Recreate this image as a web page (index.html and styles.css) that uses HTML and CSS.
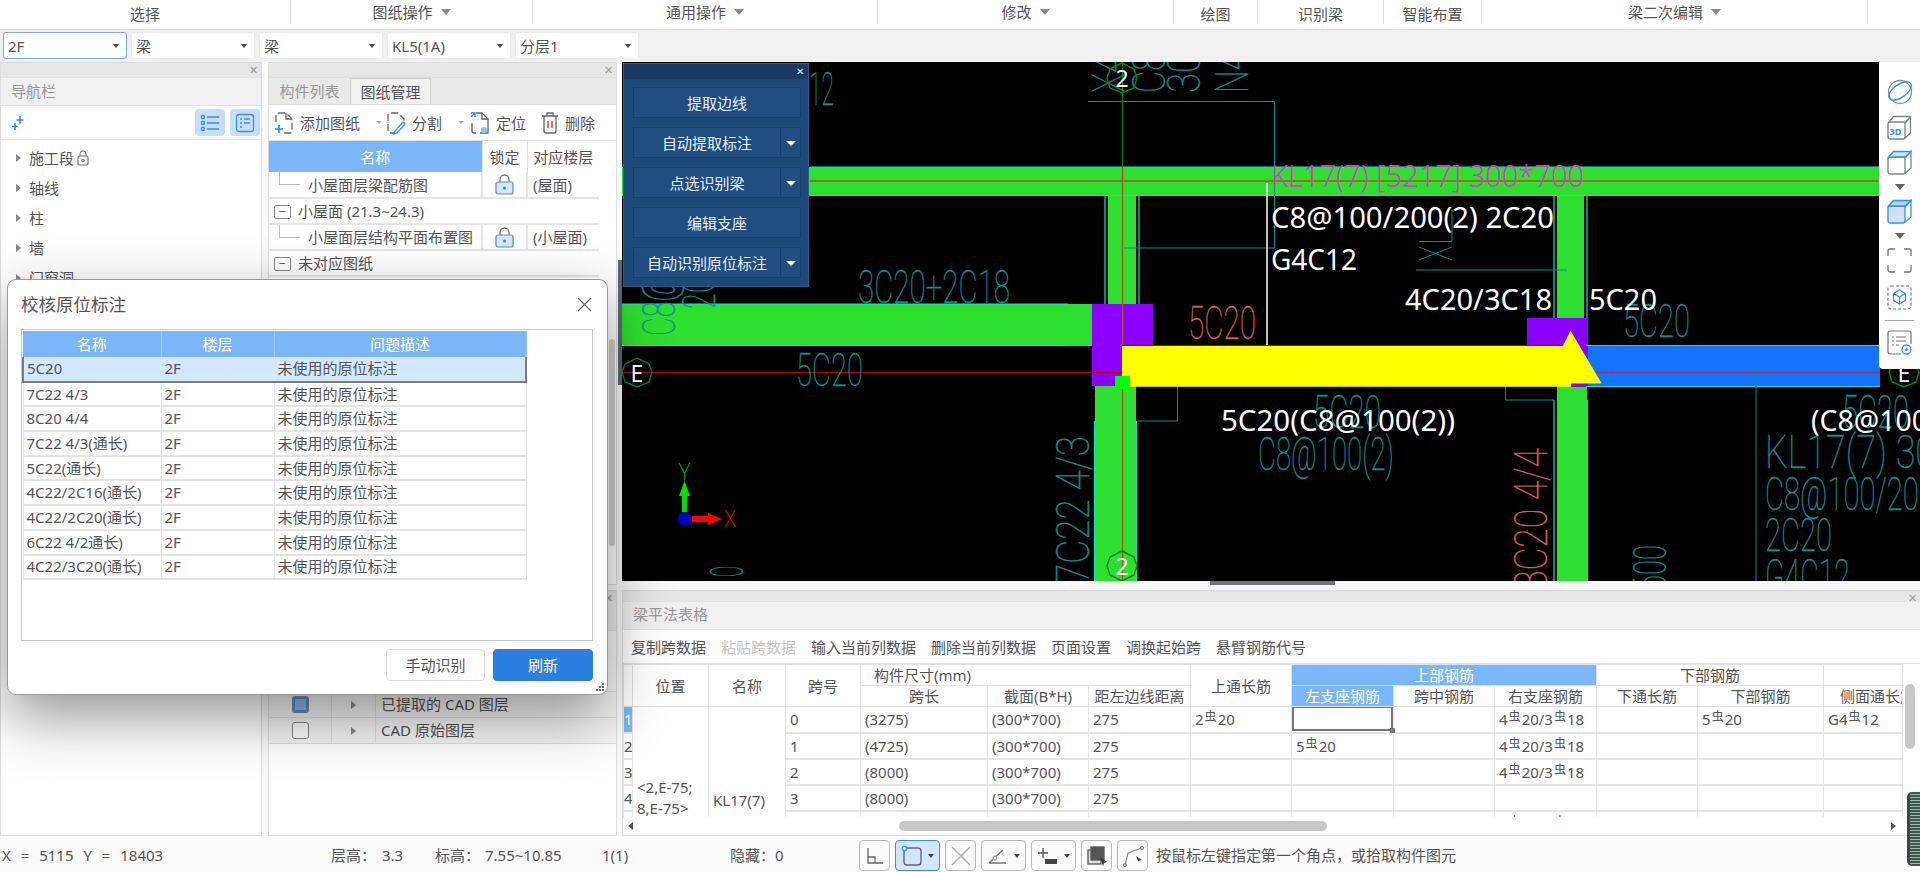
FILE: index.html
```html
<!DOCTYPE html>
<html lang="zh-CN">
<head>
<meta charset="utf-8">
<title>梁平法</title>
<link rel="stylesheet" href="styles.css">
</head>
<body>
<div class="app">
  <nav class="menu">
    <div class="mi low">选择</div>
    <div class="mi">图纸操作<i class="tri"></i></div>
    <div class="mi">通用操作<i class="tri"></i></div>
    <div class="mi">修改<i class="tri"></i></div>
    <div class="mi low">绘图</div>
    <div class="mi low">识别梁</div>
    <div class="mi low">智能布置</div>
    <div class="mi">梁二次编辑<i class="tri"></i></div>
    <div class="mi last"></div>
  </nav>
  <div class="selects">
    <div class="sel active">2F<i class="tri-sm"></i></div>
    <div class="sel">梁<i class="tri-sm"></i></div>
    <div class="sel">梁<i class="tri-sm"></i></div>
    <div class="sel">KL5(1A)<i class="tri-sm"></i></div>
    <div class="sel">分层1<i class="tri-sm"></i></div>
  </div>

  <main class="main">
    <section class="col-left panel">
      <div class="phead"><span class="px">✕</span></div>
      <div class="ptitle">导航栏</div>
      <div class="nav-tools">
        <svg class="sparkle" width="14" height="16" viewBox="0 0 14 16"><path d="M9 1v8M5.500 5h7M4 8v7M1 11.500h6" fill="none" stroke="#2b86ea" stroke-width="1.500"/></svg>
        <span class="tog"><svg width="20" height="20" viewBox="0 0 20 20" fill="none" stroke="#3a8fe8" stroke-width="1.300"><rect x="1.500" y="2.500" width="3" height="3" rx="1"/><rect x="1.500" y="8.500" width="3" height="3" rx="1"/><rect x="1.500" y="14.500" width="3" height="3" rx="1"/><path d="M7 4h12M7 10h12M7 16h12"/></svg></span>
        <span class="tog"><svg width="20" height="20" viewBox="0 0 20 20" fill="none" stroke="#3a8fe8" stroke-width="1.300"><rect x="1.500" y="1.500" width="17" height="17" rx="2.500"/><path d="M5 6h2M9 6h6M5 10h2M9 10h6M5 14h2"/></svg></span>
      </div>
      <ul class="tree">
        <li><i class="arr"></i>施工段<svg class="mini-lock" width="12" height="16" viewBox="0 0 12 16" fill="none" stroke="#777" stroke-width="1.200"><path d="M3 6V4a3 3 0 0 1 6 0v2"/><rect x="1" y="6" width="10" height="9" rx="1.500"/><circle cx="6" cy="10.500" r="1.200"/></svg></li>
        <li><i class="arr"></i>轴线</li>
        <li><i class="arr"></i>柱</li>
        <li><i class="arr"></i>墙</li>
        <li><i class="arr"></i>门窗洞</li>
      </ul>
    </section>

    <div class="col-mid">
      <section class="panel mid-top">
        <div class="phead"><span class="px">✕</span></div>
        <div class="tabs"><span class="tab">构件列表</span><span class="tab on">图纸管理</span></div>
        <div class="mid-tools">
          <span class="ti ti-add"><svg width="20" height="24" viewBox="0 0 20 24" fill="none" stroke="#666" stroke-width="1.300"><path d="M2 11V4a2 2 0 0 1 2-2h8l6 6v12a2 2 0 0 1-2 2h-6" stroke-dasharray="7 3"/><path d="M12 2v6h6"/><path d="M5 14v8M1 18h8" stroke="#2b86ea" stroke-width="1.600"/></svg>添加图纸<i class="tri-xs"></i></span>
          <span class="ti ti-split"><svg width="20" height="24" viewBox="0 0 20 24" fill="none" stroke="#666" stroke-width="1.300"><path d="M2 20V4a2 2 0 0 1 2-2h8l6 6v4M4 22h4" stroke-dasharray="7 3"/><path d="M17 11l2 2-8 9-3 1 1-3z" stroke="#3a8fe8"/></svg>分割<i class="tri-xs"></i></span>
          <span class="ti ti-loc"><svg width="20" height="24" viewBox="0 0 20 24" fill="none" stroke="#666" stroke-width="1.300"><path d="M6 2h6l6 6v14H10M2 12v8a2 2 0 0 0 2 2h2"/><path d="M12 2v6h6"/><path d="M1 6l4-4M1 2h4v4" stroke="#2b86ea"/><circle cx="14" cy="19" r="3" fill="#8fc1f5" stroke="none"/></svg>定位</span>
          <span class="ti ti-del"><svg width="18" height="24" viewBox="0 0 18 24" fill="none" stroke="#666" stroke-width="1.300"><path d="M1 5h16M6 5V2h6v3"/><path d="M3 5v15a2 2 0 0 0 2 2h8a2 2 0 0 0 2-2V5"/><path d="M7 10v7M11 10v7" stroke="#e04a3a" stroke-width="1.600"/></svg>删除</span>
        </div>
        <table class="dwg">
          <colgroup><col class="d1"><col class="d2"><col class="d3"></colgroup>
          <tr><th class="blue">名称</th><th>锁定</th><th>对应楼层</th></tr>
          <tr><td class="leaf"><i class="branch"></i>小屋面层梁配筋图</td><td class="ctr"><svg width="19" height="21" viewBox="0 0 19 21" fill="none"><path d="M5 9V5.500a4.500 4.500 0 0 1 9 0V9" stroke="#777" stroke-width="1.300"/><rect x="1" y="8" width="17" height="12" rx="2" fill="#d5e6f9" stroke="#6a86a8" stroke-width="1.200"/><circle cx="9.500" cy="14" r="1.500" fill="#2b86ea"/></svg></td><td>(屋面)</td></tr>
          <tr><td colspan="3" class="grp"><i class="exp">−</i>小屋面 (21.3~24.3)</td></tr>
          <tr><td class="leaf"><i class="branch"></i>小屋面层结构平面布置图</td><td class="ctr"><svg width="19" height="21" viewBox="0 0 19 21" fill="none"><path d="M5 9V5.500a4.500 4.500 0 0 1 9 0V9" stroke="#777" stroke-width="1.300"/><rect x="1" y="8" width="17" height="12" rx="2" fill="#d5e6f9" stroke="#6a86a8" stroke-width="1.200"/><circle cx="9.500" cy="14" r="1.500" fill="#2b86ea"/></svg></td><td>(小屋面)</td></tr>
          <tr><td colspan="3" class="grp"><i class="exp">−</i>未对应图纸</td></tr>
        </table>
        <div class="mid-scroll"></div>
      </section>
      <section class="panel mid-bot">
        <div class="phead small"><span class="px">✕</span></div>
        <div class="pband"></div>
        <div class="layers">
          <div class="lrow blank"></div>
          <div class="lrow"><span class="lc"><i class="chk on"></i></span><span class="la"><i class="arr"></i></span><span class="ln">已提取的 CAD 图层</span></div>
          <div class="lrow"><span class="lc"><i class="chk"></i></span><span class="la"><i class="arr"></i></span><span class="ln">CAD 原始图层</span></div>
        </div>
      </section>
    </div>

    <div class="col-right">
      <div class="canvas">
        <svg class="cad" width="1298" height="519" viewBox="622 62 1298 519">
          <!-- beams -->
          <rect class="gr" x="622" y="167" width="1260" height="29"/>
          <rect class="gr" x="1108" y="196" width="28" height="110"/>
          <rect class="gr" x="1557" y="196" width="27" height="124"/>
          <rect class="gr" x="622" y="304" width="472" height="42"/>
          <rect class="gr" x="1095" y="386" width="41" height="195"/>
          <rect class="gr" x="1557" y="386" width="30" height="195"/>
          <rect class="bl" x="1586" y="345" width="294" height="42"/>
          <!-- column blocks -->
          <path class="pu" d="M1092 304h61v41h-31v41h-30z"/>
          <path class="pu" d="M1527 318h61v69h-17v-42h-44z"/>
          <!-- cyan beam edges -->
          <g class="edge">
            <path d="M810 167H1880M810 195.500H1880"/>
            <path d="M1105 196V304M1139 196V304M1554 196V318M1587 196V318"/>
            <path d="M622 304H1068M622 345.500H1068"/>
            <path d="M1586 345.500H1880M1586 386.500H1880"/>
            <path d="M1094.500 421V581M1136.500 421V581M1554 400V581M1587.500 400V581"/>
          </g>
          <!-- teal helper lines -->
          <g class="tl">
            <path d="M1088 101.500H1274.500V248H1124"/>
            <path d="M1419 241.500H1452V210M1416 270H1567M1419 247L1452 260M1419 260L1452 247"/>
            <path d="M1177.500 387V421H1137M1505.500 387V400H1554M1756 367V581"/>
          </g>
          <!-- axis lines -->
          <path class="ax-g" d="M1122.500 62V167"/>
          <path class="ax-b" d="M1122.500 167V345M1122.500 386V581M810 181H1880"/>
          <path class="ax-r" d="M622 372.500H1122"/>
          <path class="ax-m" d="M1586 372.500H1880"/>
          <path class="wh" d="M1267 183V345"/>
          <!-- active beam -->
          <polygon class="ye" points="1122,345.700 1563,345.700 1570.600,330.700 1601.700,383.500 1571,383.500 1571,386.700 1122,386.700"/>
          <rect class="sq" x="1115" y="376" width="15" height="13"/>
          <!-- teal CAD text -->
          <g class="t">
            <text x="809" y="105" textLength="25" lengthAdjust="spacingAndGlyphs">12</text>
            <text x="858" y="303" textLength="152" lengthAdjust="spacingAndGlyphs">3C20+2C18</text>
            <text x="796" y="386" textLength="67" lengthAdjust="spacingAndGlyphs">5C20</text>
            <text x="1313" y="428" textLength="68" lengthAdjust="spacingAndGlyphs">5C20</text>
            <text x="1258" y="470" textLength="136" lengthAdjust="spacingAndGlyphs">C8@100(2)</text>
            <text x="1623" y="337" textLength="67" lengthAdjust="spacingAndGlyphs">5C20</text>
            <text x="1842" y="428" textLength="67" lengthAdjust="spacingAndGlyphs">5C20</text>
            <text x="1765" y="468" textLength="170" lengthAdjust="spacingAndGlyphs">KL17(7) 30</text>
            <text x="1765" y="510" textLength="170" lengthAdjust="spacingAndGlyphs">C8@100/200</text>
            <text x="1765" y="551" textLength="67" lengthAdjust="spacingAndGlyphs">2C20</text>
            <text x="1765" y="592" textLength="85" lengthAdjust="spacingAndGlyphs">G4C12</text>
            <text transform="translate(1089,584) rotate(-90)" textLength="148" lengthAdjust="spacingAndGlyphs">7C22 4/3</text>
            <text transform="translate(675,336) rotate(-90)" textLength="200" lengthAdjust="spacingAndGlyphs">C8@100/200(2)</text>
            <text transform="translate(715,309) rotate(-90)" textLength="66" lengthAdjust="spacingAndGlyphs">2C20</text>
            <text transform="translate(743,577) rotate(-90)" textLength="11" lengthAdjust="spacingAndGlyphs">0</text>
            <text transform="translate(1666,590) rotate(-90)" textLength="45" lengthAdjust="spacingAndGlyphs">600</text>
            <text transform="translate(1125,93) rotate(-90)" textLength="60" lengthAdjust="spacingAndGlyphs">X4C</text>
            <text transform="translate(1165,93) rotate(-90)" textLength="60" lengthAdjust="spacingAndGlyphs">C88</text>
            <text transform="translate(1200,93) rotate(-90)" textLength="60" lengthAdjust="spacingAndGlyphs">300</text>
            <text transform="translate(1248,93) rotate(-90)" textLength="40" lengthAdjust="spacingAndGlyphs">N4</text>
          </g>
          <g class="t rd">
            <text x="1188" y="339" textLength="68" lengthAdjust="spacingAndGlyphs">5C20</text>
            <text transform="translate(1546.500,590) rotate(-90)" textLength="142" lengthAdjust="spacingAndGlyphs">8C20 4/4</text>
          </g>
          <!-- annotations -->
          <text class="mg" x="1271" y="187" textLength="313" lengthAdjust="spacingAndGlyphs">KL17(7) [5217] 300*700</text>
          <g class="wt">
            <text x="1271" y="228" textLength="283" lengthAdjust="spacingAndGlyphs">C8@100/200(2) 2C20</text>
            <text x="1271" y="270" textLength="86" lengthAdjust="spacingAndGlyphs">G4C12</text>
            <text x="1405" y="310" textLength="147" lengthAdjust="spacingAndGlyphs">4C20/3C18</text>
            <text x="1589" y="310" textLength="68" lengthAdjust="spacingAndGlyphs">5C20</text>
            <text x="1221" y="431" textLength="234" lengthAdjust="spacingAndGlyphs">5C20(C8@100(2))</text>
            <text x="1811" y="431" textLength="117" lengthAdjust="spacingAndGlyphs">(C8@100</text>
          </g>
          <!-- axis bubbles -->
          <g class="bub">
            <polygon points="1122,63 1134,69 1137,78 1134,88 1122,93 1110,88 1107,78 1110,69"/>
            <polygon points="1122,551 1134,557 1137,566 1134,575 1122,581 1110,575 1107,566 1110,557"/>
            <polygon points="637,358 649,364 652,372 649,382 637,387 625,382 622,372 625,364"/>
            <polygon points="1904,358 1916,364 1919,372 1916,382 1904,387 1892,382 1889,372 1892,364"/>
          </g>
          <g class="bt">
            <text x="1122" y="87">2</text>
            <text x="1122" y="575">2</text>
            <text x="637" y="382">E</text>
            <text x="1904" y="382">E</text>
          </g>
          <!-- UCS -->
          <path class="ucs-y" d="M684.500 512V491"/>
          <polygon class="ucs-yh" points="684.500,481 679,496 690,496"/>
          <text class="ucs-yt" x="684.500" y="480" textLength="12" lengthAdjust="spacingAndGlyphs">Y</text>
          <path class="ucs-x" d="M692 519H710"/>
          <polygon class="ucs-xh" points="722,519 708,513 708,525"/>
          <text class="ucs-xt" x="724" y="527" textLength="12" lengthAdjust="spacingAndGlyphs">X</text>
          <circle class="ucs-o" cx="685" cy="519" r="7"/>
        </svg>

        <div class="float">
          <div class="float-head"><span>✕</span></div>
          <div class="fbtn"><span>提取边线</span></div>
          <div class="fbtn split"><span>自动提取标注</span><b></b></div>
          <div class="fbtn split"><span>点选识别梁</span><b></b></div>
          <div class="fbtn"><span>编辑支座</span></div>
          <div class="fbtn split"><span>自动识别原位标注</span><b></b></div>
        </div>

        <aside class="rtools">
          <svg width="26" height="26" viewBox="0 0 26 26" fill="none"><circle cx="13" cy="13" r="11.500" stroke="#8a8f96" stroke-width="1.300"/><ellipse cx="13" cy="12" rx="13" ry="6.500" transform="rotate(-35 13 12)" stroke="#3a8fe8" stroke-width="1.400"/></svg>
          <svg width="25" height="25" viewBox="0 0 25 25" fill="none" stroke="#7c838c" stroke-width="1.300"><rect x="1" y="7" width="17" height="17" rx="2"/><path d="M1.500 8l5-6.500h16a1 1 0 0 1 1 1V18l-6 5.500M18 8l6-6.500"/><text class="t3d" x="2.500" y="20">3D</text></svg>
          <svg width="25" height="25" viewBox="0 0 25 25" fill="none" stroke="#7c838c" stroke-width="1.300"><rect x="1" y="7" width="17" height="17" rx="2"/><path d="M18 8l6-6.500V18l-6 5.500"/><path d="M1.500 7l5-5.500h17.500L18 7z" fill="#cfe2f9" stroke="#3a8fe8"/></svg>
          <i class="tri-r"></i>
          <svg width="25" height="25" viewBox="0 0 25 25" fill="none" stroke="#3a8fe8" stroke-width="1.300"><rect x="1" y="7" width="17" height="17" rx="2" fill="#cfe2f9"/><path d="M18 8l6-6.500V18l-6 5.500"/><path d="M1.500 7l5-5.500h17.500L18 7z" fill="#b3d2f6"/></svg>
          <i class="tri-r"></i>
          <svg class="corners" width="25" height="25" viewBox="0 0 25 25" fill="none" stroke="#6f767e" stroke-width="1.300"><path d="M1 8V3a2 2 0 0 1 2-2h5M17 1h5a2 2 0 0 1 2 2v5M24 17v5a2 2 0 0 1-2 2h-5M8 24H3a2 2 0 0 1-2-2v-5"/></svg>
          <svg width="25" height="25" viewBox="0 0 25 25" fill="none" stroke="#6f767e" stroke-width="1.200"><rect x="1" y="1" width="23" height="23" rx="3" stroke-dasharray="3 2"/><path d="M12.500 5l6 3.500v7l-6 3.500-6-3.500v-7zM6.500 8.500l6 3.500 6-3.500M12.500 12v7" stroke="#3a8fe8"/></svg>
          <hr>
          <svg width="25" height="25" viewBox="0 0 25 25" fill="none" stroke="#6f767e" stroke-width="1.200"><path d="M14 24H3a2 2 0 0 1-2-2V3a2 2 0 0 1 2-2h19a2 2 0 0 1 2 2v11"/><path d="M5 7h2M9 7h10M5 11h2M9 11h10M5 15h2M9 15h3"/><circle cx="19.500" cy="19.500" r="4.500" stroke="#3a8fe8" stroke-width="1.300"/><circle cx="19.500" cy="19.500" r="1.500" fill="#3a8fe8" stroke="none"/></svg>
        </aside>
      </div>
      <div class="vsplit"></div>

      <section class="panel sheet">
        <div class="phead small"><span class="px">✕</span></div>
        <div class="ptitle sheet-title">梁平法表格</div>
        <div class="sheet-tools">
          <span>复制跨数据</span><span class="off">粘贴跨数据</span><span>输入当前列数据</span><span>删除当前列数据</span><span>页面设置</span><span>调换起始跨</span><span>悬臂钢筋代号</span>
        </div>
        <div class="grid-wrap">
          <table class="grid">
            <colgroup>
              <col class="c0"><col class="c1"><col class="c2"><col class="c3"><col class="c4"><col class="c5"><col class="c6"><col class="c7"><col class="c8"><col class="c9"><col class="c10"><col class="c11"><col class="c12"><col class="c13">
            </colgroup>
            <tr class="h1">
              <th rowspan="2"></th><th rowspan="2">位置</th><th rowspan="2">名称</th><th rowspan="2">跨号</th>
              <th colspan="3" class="left">构件尺寸(mm)</th>
              <th rowspan="2">上通长筋</th>
              <th colspan="3" class="sel-h">上部钢筋</th>
              <th colspan="2">下部钢筋</th>
              <th></th>
            </tr>
            <tr class="h2">
              <th>跨长</th><th>截面(B*H)</th><th>距左边线距离</th>
              <th class="sel-h">左支座钢筋</th><th>跨中钢筋</th><th>右支座钢筋</th><th>下通长筋</th><th>下部钢筋</th><th class="clip">侧面通长筋</th>
            </tr>
            <tr>
              <td class="num active">1</td><td rowspan="5" class="pos">&lt;2,E-75;<br>8,E-75&gt;</td><td rowspan="5" class="nm">KL17(7)</td>
              <td>0</td><td>(3275)</td><td>(300*700)</td><td>275</td><td>2<em>虫</em>20</td><td class="cur"><i></i></td><td></td><td>4<em>虫</em>20/3<em>虫</em>18</td><td></td><td>5<em>虫</em>20</td><td>G4<em>虫</em>12</td>
            </tr>
            <tr>
              <td class="num">2</td><td>1</td><td>(4725)</td><td>(300*700)</td><td>275</td><td></td><td>5<em>虫</em>20</td><td></td><td>4<em>虫</em>20/3<em>虫</em>18</td><td></td><td></td><td></td>
            </tr>
            <tr>
              <td class="num">3</td><td>2</td><td>(8000)</td><td>(300*700)</td><td>275</td><td></td><td></td><td></td><td>4<em>虫</em>20/3<em>虫</em>18</td><td></td><td></td><td></td>
            </tr>
            <tr>
              <td class="num">4</td><td>3</td><td>(8000)</td><td>(300*700)</td><td>275</td><td></td><td></td><td></td><td></td><td></td><td></td><td></td>
            </tr>
            <tr>
              <td class="num">5</td><td>4</td><td>(8000)</td><td>(300*700)</td><td>275</td><td></td><td></td><td></td><td>4<em>虫</em>20/3<em>虫</em>18</td><td></td><td></td><td></td>
            </tr>
          </table>
          <div class="vbar"></div>
        </div>
        <div class="hbar"><i class="larr"></i><div class="hthumb"></div><i class="rarr"></i></div>
      </section>
    </div>
  </main>

  <footer class="status">
    <span class="s-xy">X = 5115 Y = 18403</span>
    <span class="s-a">层高：</span><span class="s-b">3.3</span>
    <span class="s-c">标高：</span><span class="s-d">7.55~10.85</span>
    <span class="s-e">1(1)</span>
    <span class="s-f">隐藏：0</span>
    <div class="sbtns">
      <span class="sb"><svg width="22" height="22" viewBox="0 0 22 22" fill="none" stroke="#666" stroke-width="1.300"><path d="M4 3v15h15M4 12h7v6"/></svg></span>
      <span class="sb wide on"><svg width="22" height="22" viewBox="0 0 22 22" fill="none"><rect x="3" y="3" width="17" height="17" rx="3" stroke="#666" stroke-width="1.400"/><circle cx="3.500" cy="3.500" r="2.300" fill="#d4e6fb" stroke="#3a8fe8" stroke-width="1.200"/></svg><i class="tri-sm"></i></span>
      <span class="sb"><svg width="22" height="22" viewBox="0 0 22 22" fill="none" stroke="#aaa" stroke-width="1.300"><path d="M2 2l18 18M20 2L2 20"/></svg></span>
      <span class="sb wide"><svg width="22" height="22" viewBox="0 0 22 22" fill="none" stroke="#777" stroke-width="1.300"><path d="M2 18h17M2 18L16 5"/><circle cx="8" cy="13" r="1.800" stroke="#999" fill="#fff"/></svg><i class="tri-sm"></i></span>
      <span class="sb wide"><svg width="22" height="22" viewBox="0 0 22 22"><path d="M6 3v10M1 8h10" fill="none" stroke="#555" stroke-width="1.400"/><rect x="8" y="14" width="12" height="5" fill="#444"/></svg><i class="tri-sm"></i></span>
      <span class="sb"><svg width="22" height="22" viewBox="0 0 22 22" fill="none" stroke="#555" stroke-width="1.300"><rect x="2" y="5" width="13" height="14" fill="#ddd"/><rect x="5" y="2" width="13" height="13" fill="#555"/><path d="M14 12l7 5-3 1-1 3z" fill="#333" stroke="none"/></svg></span>
      <span class="sb"><svg width="22" height="22" viewBox="0 0 22 22" fill="none" stroke="#888" stroke-width="1.200"><path d="M3 20l3-12 14-5"/><circle cx="3" cy="20" r="1.500"/><circle cx="20" cy="3" r="1.500"/><path d="M14 11l6 4-4 1z" fill="#444" stroke="none"/></svg></span>
    </div>
    <span class="s-hint">按鼠标左键指定第一个角点，或拾取构件图元</span>
  </footer>
</div>

<div class="sash-v"></div>
<div class="sash-h"></div>
<div class="meter"></div>

<div class="dialog">
  <header class="dlg-head"><h2>校核原位标注</h2><svg class="dlg-x" width="15" height="15" viewBox="0 0 15 15" fill="none" stroke="#666" stroke-width="1.200"><path d="M1 1l13 13M14 1L1 14"/></svg></header>
  <div class="dlg-frame">
    <table class="chk-table">
      <colgroup><col class="k1"><col class="k2"><col class="k3"></colgroup>
      <tr><th>名称</th><th>楼层</th><th>问题描述</th></tr>
      <tr class="picked"><td>5C20</td><td>2F</td><td>未使用的原位标注</td></tr>
      <tr><td>7C22 4/3</td><td>2F</td><td>未使用的原位标注</td></tr>
      <tr><td>8C20 4/4</td><td>2F</td><td>未使用的原位标注</td></tr>
      <tr><td>7C22 4/3(通长)</td><td>2F</td><td>未使用的原位标注</td></tr>
      <tr><td>5C22(通长)</td><td>2F</td><td>未使用的原位标注</td></tr>
      <tr><td>4C22/2C16(通长)</td><td>2F</td><td>未使用的原位标注</td></tr>
      <tr><td>4C22/2C20(通长)</td><td>2F</td><td>未使用的原位标注</td></tr>
      <tr><td>6C22 4/2通长)</td><td>2F</td><td>未使用的原位标注</td></tr>
      <tr><td>4C22/3C20(通长)</td><td>2F</td><td>未使用的原位标注</td></tr>
    </table>
  </div>
  <div class="dlg-actions">
    <button class="btn">手动识别</button>
    <button class="btn primary">刷新</button>
  </div>
  <svg class="grip" width="10" height="10" viewBox="0 0 10 10" fill="#777"><rect x="7" y="1" width="2" height="2"/><rect x="4" y="4" width="2" height="2"/><rect x="7" y="4" width="2" height="2"/><rect x="1" y="7" width="2" height="2"/><rect x="4" y="7" width="2" height="2"/><rect x="7" y="7" width="2" height="2"/></svg>
</div>
</body>
</html>
```

FILE: styles.css
```css
* { box-sizing: border-box; }
html, body { margin: 0; padding: 0; }
body {
  width: 1920px; height: 872px; overflow: hidden; position: relative;
  font: 15px/1.2 "Noto Sans", "Noto Sans CJK SC", sans-serif;
  color: #555; background: #f9f9f9;
}
.app { display: flex; flex-direction: column; height: 872px; }
i, em { font-style: normal; }

/* menu */
.menu {
  display: grid; height: 30px; flex: none; background: #fff; border-bottom: 1px solid #ddd;
  grid-template-columns: 291px 242px 345px 296px 84px 126px 98px 386px 1fr;
}
.mi { height: 24px; border-right: 1px solid #e0e0e0; display: flex; align-items: center; justify-content: center; }
.mi.low { padding-top: 4px; }
.mi.last { border: 0; }
.tri { display: inline-block; margin-left: 8px; border: 5px solid transparent; border-top: 6px solid #888; border-bottom: 0; }
.tri-sm { display: inline-block; border: 3.5px solid transparent; border-top: 4px solid #444; border-bottom: 0; }
.tri-xs { display: inline-block; margin-left: 10px; border: 3px solid transparent; border-top: 3px solid #aaa; border-bottom: 0; }

.selects { height: 32px; flex: none; background: #f0f0f0; padding: 2px 3px; display: flex; gap: 4px; }
.sel {
  width: 124px; height: 27px; background: #fff; border-radius: 3px; border: 1px solid #ececec;
  display: flex; align-items: center; justify-content: space-between; padding: 0 7px 0 4px; color: #555;
}
.sel.active { border-color: #7fa9da; }

/* main layout */
.main { display: grid; grid-template-columns: 262px 349px 1fr; column-gap: 6px; flex: none; height: 774px; background: #fafafa; }
.panel { background: #fff; border: 1px solid #ddd; border-top: 0; }
.col-left { display: flex; flex-direction: column; }
.phead { height: 15px; background: #e6e6e6; position: relative; border-top: 1px solid #d8d8d8; flex: none; }
.phead.small { height: 11px; }
.px { position: absolute; right: 3px; top: 0; font-size: 11px; line-height: 13px; color: #999; }
.ptitle { height: 28px; background: #f0f0f0; color: #999; padding: 4px 0 0 10px; border-top: 1px solid #e2e2e2; flex: none; }
.sheet-title { padding-top: 3px; }
.nav-tools { height: 35px; display: flex; align-items: center; gap: 5px; border-bottom: 1px solid #e2e2e2; padding-right: 1px; border-top: 1px solid #e2e2e2; }
.sparkle { margin: 0 auto 0 10px; }
.tog { width: 30px; height: 27px; background: #c6ddf6; border-radius: 4px; display: flex; align-items: center; justify-content: center; }
.tree { list-style: none; margin: 0; padding: 3px 0 0 0; }
.tree li { height: 30px; padding-left: 15px; display: flex; align-items: center; gap: 8px; position: relative; color: #555; }
.mini-lock { margin-left: -5px; }
.arr { display: inline-block; border: 4px solid transparent; border-left: 5px solid #888; border-right: 0; }

/* middle */
.col-mid { display: flex; flex-direction: column; gap: 5px; }
.mid-top { height: 523px; position: relative; }
.mid-bot { height: 246px; flex: none; }
.tabs { height: 28px; background: #e9e9e9; display: flex; border-bottom: 1px solid #ddd; border-top: 1px solid #dcdcdc; }
.tab { width: 81px; text-align: center; line-height: 27px; color: #999; }
.tab.on { background: #f1f1f1; color: #555; border: 1px solid #cfcfcf; border-bottom: 0; }
.mid-tools { height: 36px; display: flex; align-items: center; border-bottom: 1px solid #e2e2e2; padding-left: 5px; position: relative; }
.ti { display: flex; align-items: center; gap: 6px; }
.ti-add { width: 112px; }
.ti-split { width: 84px; }
.ti-loc { width: 71px; }
.dwg { border-collapse: collapse; table-layout: fixed; width: 330px; margin-left: 0; }
.d1 { width: 213px; } .d2 { width: 45px; } .d3 { width: 72px; }
.dwg th { height: 31px; font-weight: 400; border-right: 1px solid #e2e2e2; }
.dwg th:last-child { border-right: 0; }
.dwg th.blue { background: #7ab6f8; color: #fff; }
.dwg td { height: 26px; border: 2px solid #e6e6e6; border-width: 0 2px 2px 0; padding: 0 0 0 5px; white-space: nowrap; }
.dwg td:last-child { border-right: 0; }
.dwg .ctr { padding: 0; text-align: center; line-height: 0; }
.dwg .leaf { padding-left: 39px; position: relative; }
.branch { position: absolute; left: 10px; top: 0; width: 21px; height: 13px; border-left: 1px solid #bbb; border-bottom: 1px solid #bbb; }
.grp { padding-left: 2px; }
.exp { display: inline-block; width: 17px; height: 14px; line-height: 12px; text-align: center; border: 1px solid #888; border-radius: 2px; margin-right: 7px; font-size: 12px; vertical-align: 1px; }
.mid-scroll { position: absolute; right: 1px; top: 277px; width: 6px; height: 207px; background: #cfcfcf; border-radius: 3px; }
.pband { height: 30px; background: #f0f0f0; border-bottom: 1px solid #e2e2e2; }
.layers { background: #f7f7f7; }
.lrow { height: 26px; display: grid; grid-template-columns: 63px 44px 1fr; border-bottom: 1px solid #dfdfdf; background: #f6f6f6; }
.lrow.blank { height: 61px; background: #fafafa; }
.lc, .la { border-right: 1px solid #dfdfdf; display: flex; align-items: center; justify-content: center; }
.ln { padding-left: 5px; line-height: 25px; }
.chk { width: 17px; height: 17px; border: 1px solid #888; border-radius: 3px; background: #fff; display: block; }
.chk.on { background: #8fb8ea; border: 2px solid #8a8a8a; box-shadow: inset 0 0 0 1px #3a8fe8; }

/* right */
.col-right { display: flex; flex-direction: column; margin-left: -1px; }
.canvas { height: 519px; background: #000; position: relative; overflow: hidden; flex: none; }
.cad { display: block; }
.gr { fill: #2ddf2f; }
.bl { fill: #1474fb; }
.pu { fill: #8b00ff; }
.ye { fill: #ffff00; }
.sq { fill: #00ff00; }
.edge path { fill: none; stroke: #19dbd6; stroke-width: 1.200; }
.tl path { fill: none; stroke: #0b8d92; stroke-width: 1; }
.ax-g { stroke: #0a7d0a; stroke-width: 1.200; fill: none; }
.ax-b { stroke: #a85a1c; stroke-width: 1.400; fill: none; }
.ax-r { stroke: #b00000; stroke-width: 1.400; fill: none; }
.ax-m { stroke: #a03070; stroke-width: 2; fill: none; }
.wh { stroke: #fff; stroke-width: 1.500; fill: none; }
.t text { font: 100 47px Roboto, "Noto Sans", sans-serif; fill: #0f8f94; stroke: #0f8f94; stroke-width: .35; }
.t.rd text { fill: #d8605a; stroke: #d8605a; }
.mg { font: 300 31px "Noto Sans", sans-serif; fill: #d040c8; }
.wt text { font: 400 29px "Noto Sans", sans-serif; fill: #fff; }
.bub polygon { fill: none; stroke: #0a860a; stroke-width: 1.400; }
.bt text { font: 400 23px "Noto Sans", sans-serif; fill: #fff; text-anchor: middle; }
.ucs-y { stroke: #00e000; stroke-width: 5; }
.ucs-yh { fill: #00e000; }
.ucs-yt { font: 100 24px Roboto, sans-serif; fill: #00d000; stroke: #00d000; stroke-width: .3; text-anchor: middle; }
.ucs-x { stroke: #ff0000; stroke-width: 6; }
.ucs-xh { fill: #ff0000; }
.ucs-xt { font: 100 24px Roboto, sans-serif; fill: #ff0000; stroke: #ff0000; stroke-width: .3; }
.ucs-o { fill: #0000c0; }

.float { position: absolute; left: 1px; top: 1px; width: 186px; height: 224px; background: #1c4a78; border: 1px solid #2a5c94; display: flex; flex-direction: column; }
.float-head { height: 15px; background: #1a3a62; text-align: right; padding-right: 4px; color: #d8e4f0; font-size: 10px; line-height: 15px; margin-bottom: 8px; flex: none; }
.fbtn { margin: 0 7px 9px 9px; height: 31px; background: #204e80; border: 1px solid #17406e; display: flex; color: #e8eef5; text-align: center; line-height: 30px; flex: none; }
.fbtn span { flex: 1; }
.fbtn b { width: 20px; border-left: 1px solid #17406e; position: relative; }
.fbtn b::after { content: ""; position: absolute; left: 5px; top: 13px; border: 5px solid transparent; border-top: 5px solid #fff; border-bottom: 0; }

.rtools { position: absolute; right: 0; top: 0; width: 41px; height: 307px; background: #fff; border-radius: 0 0 0 4px; display: flex; flex-direction: column; align-items: center; padding-top: 17px; }
.rtools svg { flex: none; display: block; margin-bottom: 10px; }
.rtools svg.corners { margin-bottom: 12px; }
.rtools .t3d { font: 700 9px "Noto Sans", sans-serif; fill: #3a8fe8; stroke: none; }
.tri-r { display: block; border: 5px solid transparent; border-top: 6px solid #666; border-bottom: 0; margin: -1px 0 9px; }
.rtools hr { width: 29px; margin: 0 0 9px; border: 0; border-top: 1px solid #aaa; }

.vsplit { height: 9px; background: #f7f7f7; flex: none; }
.sheet { flex: 1; border-right: 0; display: flex; flex-direction: column; }
.sheet-tools { height: 35px; display: flex; align-items: center; gap: 15px; padding-left: 8px; border-bottom: 1px solid #e2e2e2; border-top: 1px solid #e8e8e8; flex: none; }
.off { color: #c4c4c4; }
.grid-wrap { height: 153px; overflow: hidden; position: relative; flex: none; }
.grid { border-collapse: collapse; table-layout: fixed; width: 1278px; }
.c0 { width: 9px; } .c1 { width: 76px; } .c2 { width: 77px; } .c3 { width: 75px; } .c4 { width: 127px; } .c5 { width: 101px; } .c6 { width: 102px; } .c7 { width: 101px; } .c8 { width: 102px; } .c9 { width: 101px; } .c10 { width: 102px; } .c11 { width: 101px; } .c12 { width: 126px; } .c13 { width: 79px; }
.grid th { font-weight: 400; height: 21px; border: 1px solid #e2e2e2; padding: 0; overflow: hidden; white-space: nowrap; }
.grid th.left { text-align: left; padding-left: 13px; }
.grid th.sel-h { background: #7ab6f8; color: #fff; }
.grid th.clip { text-align: left; padding-left: 16px; }
.grid td { height: 26px; border: 2px solid #e6e6e6; border-width: 1px 1px 2px 1px; padding: 0 0 0 4px; white-space: nowrap; overflow: hidden; }
.grid em { font-size: 12px; vertical-align: 4px; margin: 0 1px; }
.grid .num { padding: 0; color: #555; font-size: 15px; }
.grid .num.active { background: #7ab6f8; color: #fff; }
.grid .pos { vertical-align: top; padding: 70px 0 0 4px; line-height: 21px; border-bottom: 0; }
.grid .nm { vertical-align: top; padding: 84px 0 0 4px; border-bottom: 0; }
.grid td.cur { position: relative; overflow: visible; }
.cur i { position: absolute; left: 0; top: 0; right: 0; bottom: 1px; border: 2px solid #777; border-top-width: 1px; }
.cur i::after { content: ""; position: absolute; right: -4px; bottom: -4px; width: 5px; height: 5px; background: #777; }
.vbar { position: absolute; right: 5px; top: 20px; width: 10px; height: 65px; background: #c8c8c8; border-radius: 5px; }
.hbar { height: 18px; position: relative; border-top: 0; flex: none; }
.hthumb { position: absolute; left: 276px; top: 4px; width: 428px; height: 10px; background: #c8c8c8; border-radius: 5px; }
.larr { position: absolute; left: 5px; top: 5px; border: 4px solid transparent; border-right: 5px solid #555; border-left: 0; }
.rarr { position: absolute; right: 24px; top: 5px; border: 4px solid transparent; border-left: 5px solid #555; border-right: 0; }

/* status */
.status { height: 36px; flex: none; background: #fbfbfb; display: flex; align-items: center; padding: 1px 0 0 2px; }
.s-xy { width: 329px; word-spacing: 6px; }
.s-a { width: 51px; } .s-b { width: 53px; } .s-c { width: 50px; } .s-d { width: 117px; } .s-e { width: 128px; }
.s-f { width: 128px; }
.sbtns { display: flex; gap: 5px; padding-top: 2px; margin-left: 1px; }
.sb { width: 31px; height: 31px; border: 1.500px solid #b9b9b9; border-radius: 4px; background: #fbfbfb; display: flex; align-items: center; justify-content: center; gap: 5px; }
.sb.wide { width: 45px; }
.sb.on { background: #d4e6fb; border-color: #3d90e8; }
.s-hint { margin-left: 8px; }

/* overlays */
.sash-v { position: absolute; left: 618px; top: 260px; width: 4px; height: 125px; background: #5a6878; }
.sash-h { position: absolute; left: 1210px; top: 581px; width: 125px; height: 4px; background: #6a7684; }
.meter { position: absolute; left: 1907px; top: 792px; width: 13px; height: 74px; background: repeating-linear-gradient(#4a505c 0 2px, #7fc58a 2px 3px); border-radius: 5px 0 0 5px; border-left: 3px solid #3e4450; }

/* dialog */
.dialog {
  position: absolute; left: 7px; top: 279px; width: 601px; height: 416px;
  background: #fff; border: 1px solid #9a9a9a; border-radius: 9px;
  box-shadow: 0 22px 60px rgba(0,0,0,.42); padding: 0 14px 0 13px;
}
.dlg-head { height: 49px; display: flex; align-items: center; justify-content: space-between; }
.dlg-head h2 { margin: 0; font-size: 17.500px; font-weight: 400; color: #555; }
.dlg-x { margin-right: 1px; }
.dlg-frame { height: 312px; border: 1px solid #c8c8c8; padding: 1px 1px 1px 0; }
.chk-table { border-collapse: collapse; table-layout: fixed; width: 503px; }
.k1 { width: 138px; } .k2 { width: 113px; } .k3 { width: 252px; }
.chk-table th { height: 26px; background: #7ab6f8; color: #fff; font-weight: 400; border-right: 1px solid #98c6f9; padding: 0; }
.chk-table td { height: 24.700px; line-height: 19px; padding: 0 0 0 3px; border: 2px solid #e4e4e4; border-width: 0 1px 2px 1px; white-space: nowrap; }
.picked td { background: #d3e8fd; border-bottom-color: #7c7c7c; }
.picked td:first-child { border-left: 2px solid #7c7c7c; }
.picked td:last-child { border-right: 2px solid #7c7c7c; }
.dlg-actions { display: flex; justify-content: flex-end; gap: 8px; padding-top: 8px; }
.btn { width: 99px; height: 32px; border: 1px solid #dcdcdc; border-radius: 4px; background: #fff; font: inherit; color: #555; padding: 0; }
.btn.primary { width: 100px; background: #2b7fe3; border-color: #2b7fe3; color: #fff; }
.grip { position: absolute; right: 2px; bottom: 2px; }
```
